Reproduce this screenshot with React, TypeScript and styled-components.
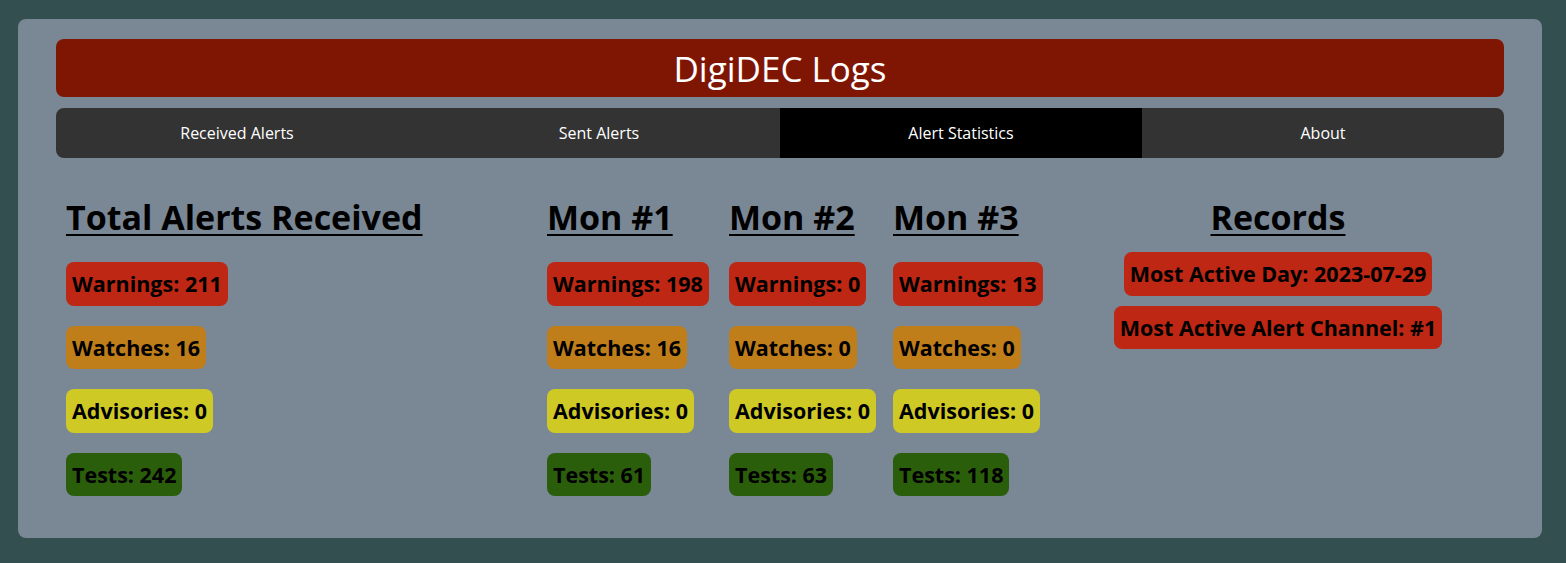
import React from "react";
import styled, { createGlobalStyle } from "styled-components";

const Global = createGlobalStyle`
  html, body { margin: 0; padding: 0; }
  body {
    background: #344f50;
    font-family: "Segoe UI", "Open Sans", "Noto Sans", sans-serif;
    padding: 19px 24px 25px 18px;
  }
`;

const Panel = styled.div`
  background: #7a8795;
  border-radius: 8px;
  padding: 20px 38px 40px 38px;
  height: 519px;
  box-sizing: border-box;
`;

const Header = styled.header`
  background: #7f1604;
  border-radius: 8px;
  height: 58px;
  display: flex;
  align-items: center;
  justify-content: center;
  color: #fff;
  font-size: 35px;
`;

const Nav = styled.nav`
  margin-top: 11px;
  height: 50px;
  display: grid;
  grid-template-columns: repeat(4, 1fr);
  background: #333;
  border-radius: 8px;
  overflow: hidden;
`;

const NavItem = styled.div<{ $active?: boolean }>`
  display: flex;
  align-items: center;
  justify-content: center;
  color: #fff;
  font-size: 16px;
  background: ${(p) => (p.$active ? "#000" : "transparent")};
`;

const Stats = styled.div`
  display: grid;
  grid-template-columns: 481px 182px 164px 169px 1fr;
  padding: 36px 10px 0 10px;
`;

const Column = styled.div<{ $center?: boolean }>`
  display: flex;
  flex-direction: column;
  align-items: ${(p) => (p.$center ? "center" : "flex-start")};
`;

const Heading = styled.h2`
  margin: 0 0 22px 0;
  font-size: 34px;
  font-weight: 700;
  text-decoration: underline;
  text-decoration-thickness: 2px;
  text-underline-offset: 4px;
  line-height: 46px;
  color: #000;
`;

const BadgeList = styled.div<{ $gap: number; $offset?: number }>`
  display: flex;
  flex-direction: column;
  align-items: inherit;
  gap: ${(p) => p.$gap}px;
  margin-top: ${(p) => p.$offset ?? 0}px;
`;

const colors: Record<string, string> = {
  warn: "#bd2713",
  watch: "#c07e1b",
  adv: "#cfc925",
  test: "#2a5e0b",
};

const Badge = styled.div<{ $kind: string }>`
  background: ${(p) => colors[p.$kind]};
  border-radius: 8px;
  padding: 0 6px;
  height: 43.6px;
  display: flex;
  align-items: center;
  font-size: 21.5px;
  font-weight: 700;
  color: #000;
  white-space: nowrap;
`;

type Mon = { title: string; w: number; wa: number; a: number; t: number };

const data: Mon[] = [
  { title: "Total Alerts Received", w: 211, wa: 16, a: 0, t: 242 },
  { title: "Mon #1", w: 198, wa: 16, a: 0, t: 61 },
  { title: "Mon #2", w: 0, wa: 0, a: 0, t: 63 },
  { title: "Mon #3", w: 13, wa: 0, a: 0, t: 118 },
];

export default function App() {
  return (
    <>
      <Global />
      <Panel>
        <Header>DigiDEC Logs</Header>
        <Nav>
          <NavItem>Received Alerts</NavItem>
          <NavItem>Sent Alerts</NavItem>
          <NavItem $active>Alert Statistics</NavItem>
          <NavItem>About</NavItem>
        </Nav>
        <Stats>
          {data.map((m) => (
            <Column key={m.title}>
              <Heading>{m.title}</Heading>
              <BadgeList $gap={20}>
                <Badge $kind="warn">Warnings: {m.w}</Badge>
                <Badge $kind="watch">Watches: {m.wa}</Badge>
                <Badge $kind="adv">Advisories: {m.a}</Badge>
                <Badge $kind="test">Tests: {m.t}</Badge>
              </BadgeList>
            </Column>
          ))}
          <Column $center>
            <Heading>Records</Heading>
            <BadgeList $gap={10} $offset={-10}>
              <Badge $kind="warn">Most Active Day: 2023-07-29</Badge>
              <Badge $kind="warn">Most Active Alert Channel: #1</Badge>
            </BadgeList>
          </Column>
        </Stats>
      </Panel>
    </>
  );
}
